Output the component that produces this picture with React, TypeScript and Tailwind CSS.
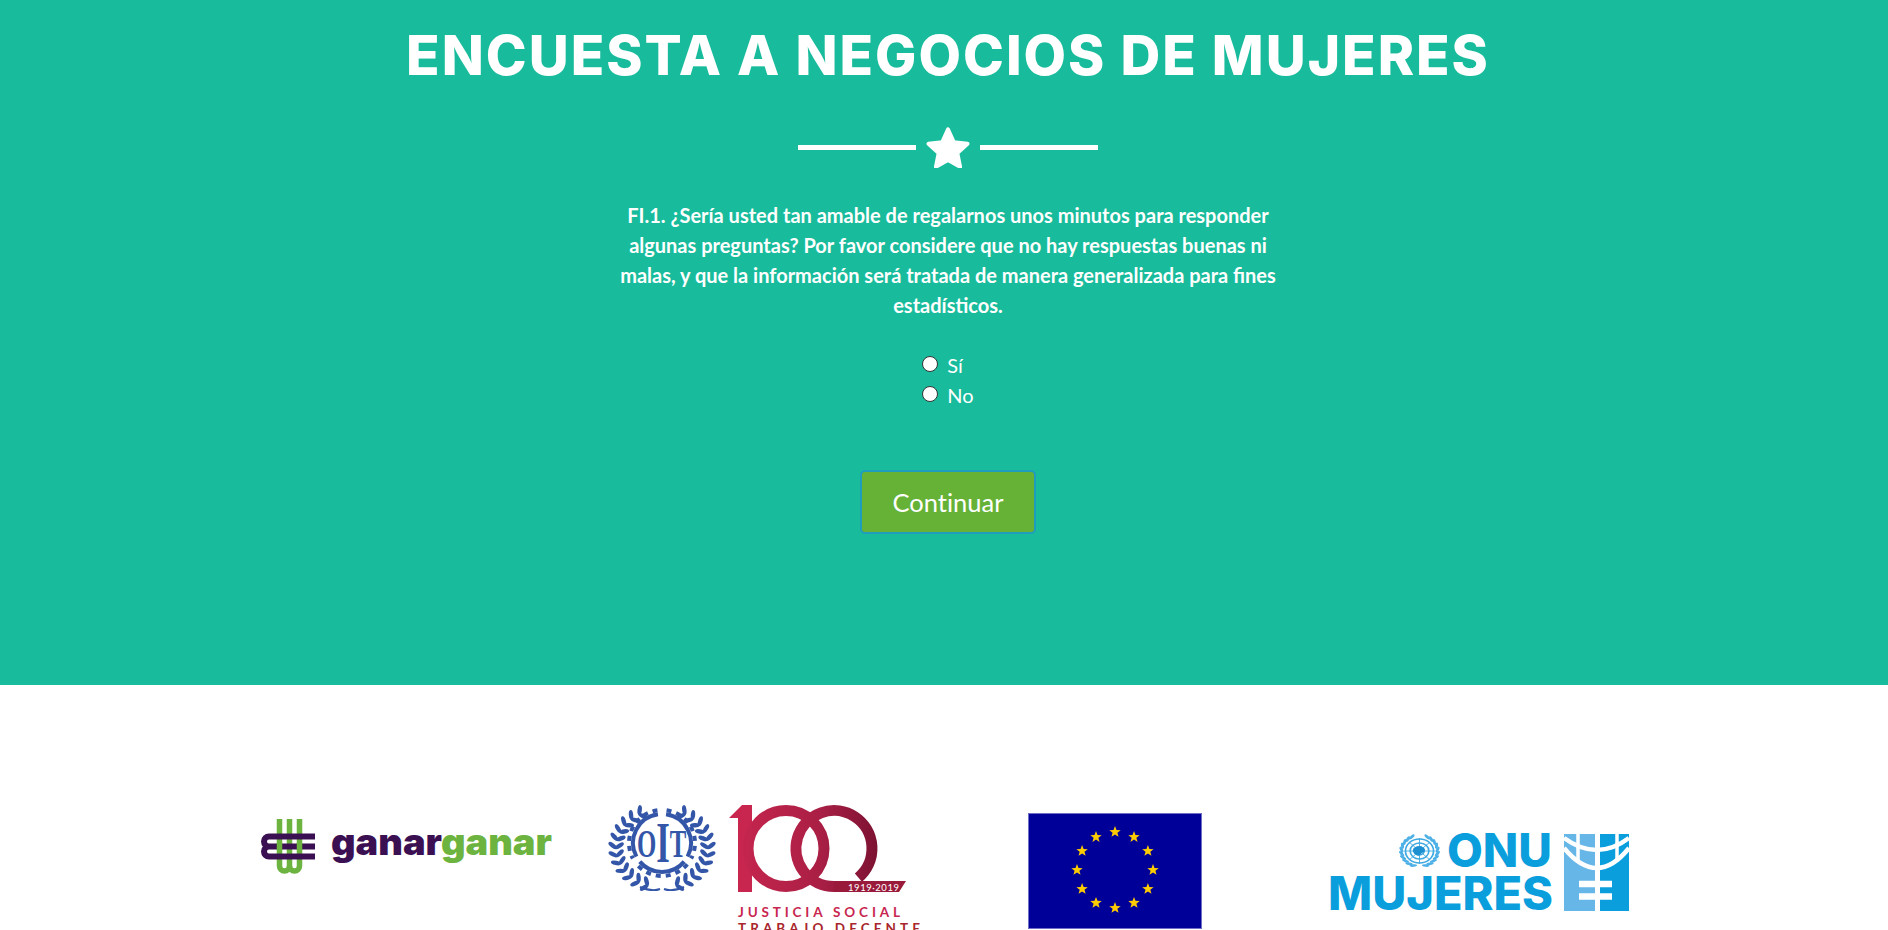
// page coordinates are used inside each logo's viewBox
function polar(cx: number, cy: number, r: number, deg: number) {
  const a = (deg * Math.PI) / 180
  return [cx + r * Math.sin(a), cy - r * Math.cos(a)]
}

function arc(cx: number, cy: number, r: number, from: number, to: number) {
  const [x0, y0] = polar(cx, cy, r, from)
  const [x1, y1] = polar(cx, cy, r, to)
  const large = Math.abs(to - from) > 180 ? 1 : 0
  return `M${x0} ${y0}A${r} ${r} 0 ${large} ${to > from ? 1 : 0} ${x1} ${y1}`
}

function starPoints(cx: number, cy: number, r: number) {
  return Array.from({ length: 10 }, (_, i) => polar(cx, cy, i % 2 ? r * 0.42 : r, i * 36).join(',')).join(' ')
}

function GanarLogo() {
  return (
    <svg width="300" height="130" viewBox="258 800 300 130" className="shrink-0">
      <g fill="none" stroke="#6cb33f" strokeWidth="5.5">
        <path d="M279.5 819V866a5 5 0 0 0 10 0V819" />
        <path d="M289.5 866a5 5 0 0 0 10 0V819" />
      </g>
      <path d="M315 836.5H269a5 5 0 0 0 0 10H315M269 846.5a5 5 0 0 0 0 10H315" fill="none" stroke="#3b1053" strokeWidth="6" />
      {/* weave: green passes over the middle bar at the outer columns */}
      <path d="M279.5 843V850M299.5 843V850" stroke="#6cb33f" strokeWidth="5.5" />
      <text x="331" y="855" textLength="221" lengthAdjust="spacingAndGlyphs" fontFamily="Inter, sans-serif" fontWeight="900" fontSize="37">
        <tspan fill="#3b1053">ganar</tspan>
        <tspan fill="#6cb33f">ganar</tspan>
      </text>
    </svg>
  )
}

const laurel = [-28, -40, -52, -64, -76, -88, -100, -112, -124, -136, -148, -160]

function OitLogo() {
  const blue = '#3356a8'
  return (
    <svg width="320" height="130" viewBox="606 800 320 130" className="shrink-0">
      <defs>
        <linearGradient id="cien" gradientUnits="userSpaceOnUse" x1="729" x2="877" y1="0" y2="0">
          <stop offset="0" stopColor="#c8264f" />
          <stop offset="0.6" stopColor="#ab1f45" />
          <stop offset="1" stopColor="#7d1233" />
        </linearGradient>
      </defs>
      {[1, -1].map((side) => (
        <g key={side} fill={blue}>
          {laurel.map((deg) => {
            const a = (deg * Math.PI) / 180
            const x = 662 + side * 46 * Math.sin(a)
            const y = 848 - 39 * Math.cos(a)
            return (
              <g key={deg} transform={`translate(${x} ${y}) rotate(${side * (90 + deg)})`}>
                <ellipse cx="-3.4" cy="-1" rx="5" ry="2.2" transform="rotate(35 -3.4 -1)" />
                <ellipse cx="3.4" cy="-1" rx="5" ry="2.2" transform="rotate(-35 3.4 -1)" />
              </g>
            )
          })}
        </g>
      ))}
      <path d="M640 887Q652 892 660 889M684 887Q672 892 664 889" fill="none" stroke={blue} strokeWidth="2" />
      <g fill="none" stroke={blue}>
        <path d={arc(662, 843, 29, -8, -118)} strokeWidth="4" />
        <path d={arc(662, 843, 29, 8, 118)} strokeWidth="4" />
        <path d={arc(662, 843, 29, 130, 230)} strokeWidth="4" />
        <path d={arc(662, 843, 33, -8, -118)} strokeWidth="4" strokeDasharray="5 5" />
        <path d={arc(662, 843, 33, 8, 118)} strokeWidth="4" strokeDasharray="5 5" />
        <path d={arc(662, 843, 33, 130, 230)} strokeWidth="4" strokeDasharray="5 5" />
      </g>
      <text transform="translate(637 857) scale(0.62 1)" fontFamily="Liberation Serif, serif" fontWeight="700" fontSize="40" fill={blue}>
        O<tspan fontSize="56" dy="5">I</tspan><tspan dy="-5">T</tspan>
      </text>
      <path d="M729 818L742 805H752V892H738V818Z" fill="#c8264f" />
      <g fill="none" stroke="url(#cien)" strokeWidth="11">
        <circle cx="786" cy="848.5" r="38" />
        <path d="M858.4 877.6A38 38 0 1 0 834 886.5" />
      </g>
      <path d="M834 881H906L899 892H834Z" fill="#9a1a3c" />
      <text x="848" y="890.5" textLength="51" fontFamily="Lato, sans-serif" fontSize="9.5" fill="#ffffff">1919·2019</text>
      <text x="738" y="917" textLength="162" fontFamily="Lato, sans-serif" fontWeight="700" fontSize="13.5" fill="#c8264f">JUSTICIA SOCIAL</text>
      <text x="738" y="933" textLength="182" fontFamily="Lato, sans-serif" fontWeight="700" fontSize="13.5" fill="#a8262c">TRABAJO DECENTE</text>
    </svg>
  )
}

const clock = Array.from({ length: 12 }, (_, i) => i * 30)

function EuFlag() {
  return (
    <svg width="182" height="130" viewBox="1024 800 182 130" className="shrink-0">
      <rect x="1028.5" y="813.5" width="173" height="115" fill="#000099" stroke="#6f6fc8" />
      {clock.map((deg) => {
        const [x, y] = polar(1115, 870, 38, deg)
        return <polygon key={deg} points={starPoints(x, y, 6)} fill="#ffcc00" />
      })}
    </svg>
  )
}

const wreath = [-160, -145, -130, -115, -100, -85, -70, -55, -40, -25, 25, 40, 55, 70, 85, 100, 115, 130, 145, 160]

function OnuLogo() {
  return (
    <svg width="308" height="130" viewBox="1326 800 308 130" className="shrink-0">
      <g transform="translate(1419.5 851) scale(1.17 1)">
        <g fill="none" stroke="#3fa9e2" strokeWidth="1.4">
          <circle r="4" />
          <circle r="8" />
          <circle r="12" />
          <path d="M0 -13V13M-13 0H13M-9 -9L9 9M9 -9L-9 9" strokeWidth="0.8" />
        </g>
        <path d="M-5 -3Q0 -7 4 -3Q6 1 2 2Q0 6 -3 4Q-7 1 -5 -3Z" fill="#1e90d2" />
        <g fill="#4db0e6">
          {wreath.map((deg) => {
            const [x, y] = polar(0, 0, 15.5, deg)
            const tilt = deg < 0 ? deg + 65 : deg - 65
            return <ellipse key={deg} cx={x} cy={y} rx="1.3" ry="3.2" transform={`rotate(${tilt} ${x} ${y})`} />
          })}
        </g>
      </g>
      <text fontFamily="Inter, sans-serif" fontWeight="800" fontSize="46" fill="#0a9fdc">
        <tspan x="1447" y="867" textLength="105" lengthAdjust="spacingAndGlyphs">ONU</tspan>
        <tspan x="1328" y="910" textLength="225" lengthAdjust="spacingAndGlyphs">MUJERES</tspan>
      </text>
      <rect x="1564" y="834" width="33" height="77" fill="#66b6e8" />
      <rect x="1597" y="834" width="32" height="77" fill="#0a9fdc" />
      <path d="M1564 838Q1597 862 1629 838M1564 848Q1597 888 1629 848" fill="none" stroke="#ffffff" strokeWidth="4.5" />
      <path d="M1597.5 834V911" stroke="#ffffff" strokeWidth="5" />
      <path d="M1578 834V860M1617 834V860" stroke="#ffffff" strokeWidth="3.5" />
      <path d="M1579 884H1612M1579 896.5H1612" stroke="#ffffff" strokeWidth="6.5" />
    </svg>
  )
}

export default function App() {
  return (
    <div className="h-screen overflow-hidden bg-white">
      <section className="h-[685px] bg-[#18bc9c] text-white font-['Lato',sans-serif] pl-[8px] flex flex-col items-center">
        <h1 className="font-['Inter',sans-serif] mt-[22px] text-[55px] leading-[66px] font-extrabold tracking-[2px] whitespace-nowrap">
          ENCUESTA A NEGOCIOS DE MUJERES
        </h1>
        <div className="mt-[38px] flex items-center gap-[10px]">
          <div className="h-[5px] w-[118px] bg-white" />
          <svg width="44" height="42" viewBox="1 0.3 22 21.5" fill="white" stroke="white" strokeWidth="2" strokeLinejoin="round">
            <path d="M12 2l3 6.6 7 .8-5.2 4.8 1.4 7L12 17.7 5.8 21.2l1.4-7L2 9.4l7-.8z" />
          </svg>
          <div className="h-[5px] w-[118px] bg-white" />
        </div>
        <p className="mt-[32px] w-[680px] text-center text-[20px] leading-[30px] font-bold">
          FI.1. ¿Sería usted tan amable de regalarnos unos minutos para responder algunas preguntas? Por favor considere que no hay respuestas buenas ni malas, y que la información será tratada de manera generalizada para fines estadísticos.
        </p>
        <div className="mt-[30px] flex flex-col items-start text-[20px] leading-[30px]">
          <label className="flex items-center gap-[9px]">
            <input type="radio" name="fi1" className="h-[16px] w-[16px] -mt-[3px] appearance-none rounded-full border border-[#333333] bg-white" />
            <span>Sí</span>
          </label>
          <label className="flex items-center gap-[9px]">
            <input type="radio" name="fi1" className="h-[16px] w-[16px] -mt-[3px] appearance-none rounded-full border border-[#333333] bg-white" />
            <span>No</span>
          </label>
        </div>
        <button className="mt-[60px] h-[64px] w-[176px] rounded-[5px] border-2 border-[#1f9dbd] bg-[#65b237] text-[25.5px] text-white [font-variant-ligatures:none]">
          Continuar
        </button>
      </section>
      <footer className="flex pt-[115px] pl-[258px]">
        <GanarLogo />
        <div className="ml-[48px]"><OitLogo /></div>
        <div className="ml-[98px]"><EuFlag /></div>
        <div className="ml-[120px]"><OnuLogo /></div>
      </footer>
    </div>
  )
}
